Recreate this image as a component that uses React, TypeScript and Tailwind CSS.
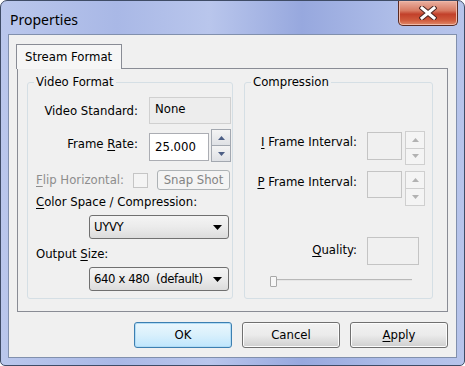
import React from "react";

const ui = "font-['DejaVu_Sans_Condensed','DejaVu_Sans',sans-serif] text-[13px]";

function U({ children }: { children: React.ReactNode }) {
  return <span className="underline underline-offset-[2px]">{children}</span>;
}

function Arrow({ up, color }: { up?: boolean; color: string }) {
  return (
    <svg width="7" height="4" viewBox="0 0 7 4">
      <path d={up ? "M0 4 L3.5 0 L7 4 Z" : "M0 0 L7 0 L3.5 4 Z"} fill={color} />
    </svg>
  );
}

function Spin({ disabled, h }: { disabled?: boolean; h: string }) {
  const border = disabled ? "border-[#cfcfcf]" : "border-[#a3a8b0]";
  const fill = disabled
    ? "bg-[#f4f4f4]"
    : "bg-gradient-to-b from-[#f4f4f4] to-[#dfe1e5]";
  const arrow = disabled ? "#b2b2b2" : "#4c5e85";
  return (
    <div className={`flex w-[20px] flex-col ${h}`}>
      <div className={`flex flex-1 items-center justify-center border ${border} ${fill}`}>
        <Arrow up color={arrow} />
      </div>
      <div className={`flex flex-1 items-center justify-center border border-t-0 ${border} ${fill}`}>
        <Arrow color={arrow} />
      </div>
    </div>
  );
}

function Combo({ value }: { value: string }) {
  return (
    <div className="ml-[61px] flex h-[24px] w-[140px] items-center justify-between rounded-[3px] border border-[#707070] bg-gradient-to-b from-[#f4f4f4] via-[#ebebeb] to-[#dcdcdc] pl-[4px] pr-[6px] whitespace-pre">
      <span className="tracking-[-0.4px]">{value}</span>
      <svg width="9" height="5" viewBox="0 0 9 5">
        <path d="M0 0 L9 0 L4.5 5 Z" fill="#000" />
      </svg>
    </div>
  );
}

function Group({ title, className, children }: { title: string; className: string; children: React.ReactNode }) {
  return (
    <div className={`relative h-[217px] rounded-[3px] border border-[#d5dfe5] ${className}`}>
      <span className="absolute -top-[9px] left-[6px] bg-[#f0f0f0] px-[2px] leading-[16px]">{title}</span>
      {children}
    </div>
  );
}

function Button({ children, primary }: { children: React.ReactNode; primary?: boolean }) {
  return (
    <div
      className={`flex h-[26px] w-[98px] items-center justify-center rounded-[3px] border ${
        primary
          ? "border-[#3c7fb1] bg-gradient-to-b from-[#eaf6fd] via-[#d9f0fc] to-[#bee6fd] shadow-[inset_0_0_0_1px_#b2dcf5]"
          : "border-[#707070] bg-gradient-to-b from-[#f2f2f2] via-[#ebebeb] to-[#cfcfcf] shadow-[inset_0_0_0_1px_#fcfcfc]"
      }`}
    >
      {children}
    </div>
  );
}

export default function App() {
  return (
    <div className={`h-[366px] w-[465px] overflow-hidden bg-white ${ui} text-black`}>
      <div className="flex h-[366px] w-[465px] flex-col rounded-t-[7px] rounded-b-[5px] border border-[#3f4c66] bg-[linear-gradient(90deg,#bac7ec_0%,#a9b8e6_25%,#b9c6ec_45%,#97a8de_65%,#aebde8_85%,#b7c4eb_100%)] px-[7px] pb-[7px]">
        {/* title bar */}
        <div className="flex h-[33px] items-start justify-between">
          <span className="mt-[10px] ml-[2px] font-['Noto_Sans',sans-serif] text-[14px] leading-[18px] text-black">
            Properties
          </span>
          <div className="-mr-[1px] flex h-[25px] w-[60px] items-center justify-center rounded-b-[5px] border border-t-0 border-[#5a2a22] bg-[linear-gradient(180deg,#eab1a2_0%,#d77a62_40%,#c2402a_55%,#cf5a3c_80%,#e08a6b_100%)] shadow-[inset_0_0_0_1px_#f0b9a8]">
            <svg width="18" height="14" viewBox="0 0 18 14">
              <path d="M3 2 L15 12 M15 2 L3 12" stroke="#4a2420" strokeWidth="5" strokeLinecap="square" />
              <path d="M3 2 L15 12 M15 2 L3 12" stroke="#ffffff" strokeWidth="3" strokeLinecap="square" />
            </svg>
          </div>
        </div>

        {/* client area */}
        <div className="flex flex-1 flex-col border border-[#8190ad] bg-[#f0f0f0]">
          <div className="ml-[7px] mt-[9px] flex">
            <div className="relative z-10 -mb-px flex h-[25px] w-[106px] items-center border border-b-0 border-[#898c95] bg-[#f6f6f6] pl-[8px] pb-[1px]">
              Stream Format
            </div>
          </div>

          <div className="ml-[8px] flex h-[244px] w-[431px] border border-[#898c95] bg-[#f0f0f0] pl-[9px] pt-[13px]">
            <Group title="Video Format" className="w-[206px]">
              <div className="flex flex-col pt-[14px]">
                <div className="flex h-[27px] items-center">
                  <span className="w-[110px] text-right">Video Standard:</span>
                  <div className="ml-[11px] flex h-[27px] w-[82px] items-center border border-[#d0d0d0] bg-[#ededed] pl-[5px] pb-[4px]">
                    None
                  </div>
                </div>

                <div className="mt-[5px] flex h-[33px] items-start">
                  <span className="mt-[5px] w-[110px] text-right leading-[20px]">
                    Frame <U>R</U>ate:
                  </span>
                  <div className="mt-[4px] ml-[11px] flex h-[28px] w-[60px] items-center border border-[#abadb3] bg-white pl-[5px]">
                    25.000
                  </div>
                  <div className="ml-[2px]">
                    <Spin h="h-[33px]" />
                  </div>
                </div>

                <div className="mt-[8px] flex h-[20px] items-center pl-[8px]">
                  <span className="w-[97px] text-[#8d8d8d]">
                    <U>F</U>lip Horizontal:
                  </span>
                  <div className="h-[15px] w-[15px] border border-[#c5c5c5] bg-[#f4f4f4]" />
                  <div className="ml-[9px] flex h-[20px] w-[73px] items-center justify-center rounded-[3px] border border-[#adb2b5] bg-[#f4f4f4] text-[#838383]">
                    Snap Shot
                  </div>
                </div>

                <div className="mt-[4px] pl-[8px] leading-[16px]">
                  <U>C</U>olor Space / Compression:
                </div>
                <div className="mt-[5px]">
                  <Combo value="UYVY" />
                </div>

                <div className="mt-[7px] pl-[8px] leading-[16px]">
                  Output <U>S</U>ize:
                </div>
                <div className="mt-[5px]">
                  <Combo value="640 x 480  (default)" />
                </div>
              </div>
            </Group>

            <Group title="Compression" className="ml-[11px] w-[189px]">
              <div className="flex flex-col pt-[48px]">
                <div className="flex items-start">
                  <span className="mt-[1px] w-[112px] text-right leading-[20px]">
                    <U>I</U> Frame Interval:
                  </span>
                  <div className="mt-[1px] ml-[10px] h-[28px] w-[35px] border border-[#c4c4c4] bg-[#f0f0f0]" />
                  <div className="ml-[3px]">
                    <Spin disabled h="h-[34px]" />
                  </div>
                </div>

                <div className="mt-[6px] flex items-start">
                  <span className="mt-[1px] w-[112px] text-right leading-[20px]">
                    <U>P</U> Frame Interval:
                  </span>
                  <div className="ml-[10px] h-[27px] w-[35px] border border-[#c4c4c4] bg-[#f0f0f0]" />
                  <div className="ml-[3px]">
                    <Spin disabled h="h-[35px]" />
                  </div>
                </div>

                <div className="mt-[31px] flex items-start">
                  <span className="mt-[3px] w-[112px] text-right leading-[20px]">
                    <U>Q</U>uality:
                  </span>
                  <div className="ml-[10px] h-[28px] w-[52px] border border-[#c4c4c4] bg-[#f0f0f0]" />
                </div>

                <div className="relative mt-[11px] ml-[25px] h-[11px] w-[142px]">
                  <div className="mt-[3px] ml-[1px] h-[2px] w-[141px] border-t border-[#b8b8b8] bg-[#e6e6e6]" />
                  <div className="absolute left-0 top-0 h-[11px] w-[7px] rounded-[1px] border border-[#a8a8a8] bg-[#f7f7f7]" />
                </div>
              </div>
            </Group>
          </div>

          <div className="mt-[10px] mr-[8px] flex justify-end gap-[10px]">
            <Button primary>OK</Button>
            <Button>Cancel</Button>
            <Button>
              <span>
                <U>A</U>pply
              </span>
            </Button>
          </div>
        </div>
      </div>
    </div>
  );
}
